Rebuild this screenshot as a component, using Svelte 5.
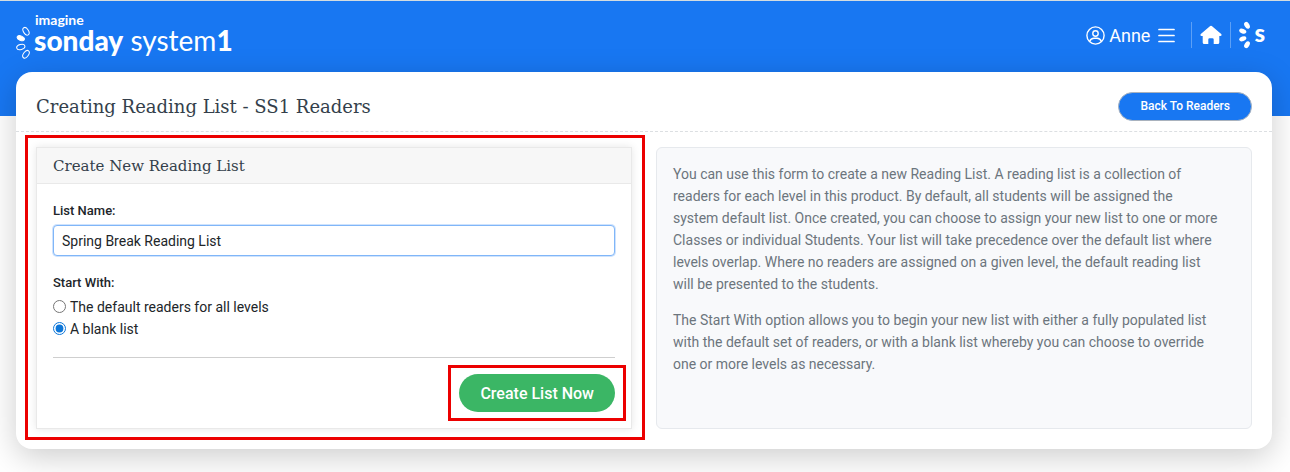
<script>
  let listName = 'Spring Break Reading List';
  let startWith = 'blank';

  const options = [
    { value: 'default', label: 'The default readers for all levels' },
    { value: 'blank', label: 'A blank list' }
  ];

  function handleSubmit() {
    listName = listName.trim();
  }
</script>

<header>
  <a class="logo" href="/" aria-label="imagine sonday system 1">
    <svg class="petals" width="16" height="34" viewBox="0 0 16 34" fill="none" stroke="#fff">
      <ellipse cx="10" cy="5.3" rx="2.5" ry="4.2" transform="rotate(-32 10 5.3)" />
      <ellipse cx="4.8" cy="12.2" rx="3.8" ry="2.2" transform="rotate(22 4.8 12.2)" fill="#fff" />
      <ellipse cx="4.8" cy="21" rx="4.2" ry="2.5" transform="rotate(-16 4.8 21)" />
      <ellipse cx="10" cy="28.3" rx="2.5" ry="4.3" transform="rotate(36 10 28.3)" />
    </svg>
    <span class="words">
      <span class="brand">imagine</span>
      <span class="product"><b>sonday</b> <span>system</span><strong>1</strong></span>
    </span>
  </a>

  <nav>
    <button class="user" type="button">
      <svg width="19" height="19" viewBox="0 0 19 19" fill="none" stroke="#fff" stroke-width="1.4">
        <circle cx="9.5" cy="9.5" r="8.6" />
        <circle cx="9.5" cy="7.5" r="2.7" />
        <path d="M3.6 15.6C4.4 13.4 6 12.3 8 12.3h3c2 0 3.6 1.1 4.4 3.3" />
      </svg>
      <span>Anne</span>
      <svg width="17" height="15" viewBox="0 0 17 15" stroke="#fff" stroke-width="1.7" stroke-linecap="round">
        <path d="M1 1.500h15M1 7.500h15M1 13.500h15" />
      </svg>
    </button>
    <a class="home" href="/home" aria-label="Home">
      <svg width="22" height="20" viewBox="0 0 22 20" fill="#fff">
        <path d="M10.200 1a1.200 1.200 0 0 1 1.600 0l9.400 8c.8.800.4 1.900-.7 1.900h-1.200v6.500a1.600 1.600 0 0 1-1.600 1.600h-4v-4.400a1.300 1.300 0 0 0-1.300-1.300h-2.800a1.300 1.300 0 0 0-1.300 1.300V19h-4a1.600 1.600 0 0 1-1.600-1.600v-6.500H1.500c-1.100 0-1.500-1.100-.7-1.900z" />
      </svg>
    </a>
    <a class="mark" href="/products" aria-label="Sonday">
      <svg width="13" height="28" viewBox="0 0 13 28" fill="#fff">
        <ellipse cx="8" cy="4.300" rx="2.400" ry="3.700" transform="rotate(-32 8 4.300)" />
        <ellipse cx="3.800" cy="10.200" rx="3.700" ry="2.300" transform="rotate(18 3.800 10.200)" />
        <ellipse cx="3.800" cy="17.800" rx="3.700" ry="2.300" transform="rotate(-18 3.800 17.800)" />
        <ellipse cx="8" cy="23.700" rx="2.400" ry="3.700" transform="rotate(32 8 23.700)" />
      </svg>
      <b>s</b>
    </a>
  </nav>
</header>

<main>
  <div class="title">
    <h1>Creating Reading List - SS1 Readers</h1>
    <button class="back" type="button">Back To Readers</button>
  </div>

  <div class="columns">
    <form class="card marked" on:submit|preventDefault={handleSubmit}>
      <h2>Create New Reading List</h2>
      <div class="body">
        <label class="name" for="list-name">List Name:</label>
        <input id="list-name" type="text" bind:value={listName} />

        <fieldset>
          <legend>Start With:</legend>
          {#each options as option}
            <label class="option">
              <input type="radio" name="start" value={option.value} bind:group={startWith} />
              {option.label}
            </label>
          {/each}
        </fieldset>

        <div class="actions">
          <span class="marked">
            <button class="create" type="submit">Create List Now</button>
          </span>
        </div>
      </div>
    </form>

    <section class="help">
      <p>
        You can use this form to create a new Reading List. A reading list is a collection of
        readers for each level in this product. By default, all students will be assigned the
        system default list. Once created, you can choose to assign your new list to one or more
        Classes or individual Students. Your list will take precedence over the default list where
        levels overlap. Where no readers are assigned on a given level, the default reading list
        will be presented to the students.
      </p>
      <p>
        The Start With option allows you to begin your new list with either a fully populated list
        with the default set of readers, or with a blank list whereby you can choose to override
        one or more levels as necessary.
      </p>
    </section>
  </div>
</main>

<style>
  :global(body) {
    margin: 0;
    background: #fff;
    color: #212529;
    font-family: Roboto, sans-serif;
    font-size: 14px;
  }

  * {
    box-sizing: border-box;
  }

  button {
    font-family: inherit;
    cursor: pointer;
  }

  header {
    display: flex;
    justify-content: space-between;
    align-items: flex-start;
    height: 116px;
    padding: 12px 25px 0 16px;
    border-top: 1px solid #d3dce0;
    background: #1877f2;
    color: #fff;
  }

  a {
    color: #fff;
    text-decoration: none;
  }

  .logo {
    display: flex;
    gap: 2px;
    font-family: Lato, sans-serif;
  }

  .petals {
    margin-top: 13px;
  }

  .words {
    display: flex;
    flex-direction: column;
  }

  .brand {
    padding-left: 1px;
    font-size: 14px;
    font-weight: 700;
    line-height: 13px;
  }

  .product {
    font-size: 28px;
    line-height: 28px;
  }

  .product b {
    font-weight: 900;
  }

  .product strong {
    font-weight: 900;
  }

  nav {
    display: flex;
    align-items: center;
    margin-top: 9px;
  }

  .user {
    display: flex;
    align-items: center;
    gap: 4px;
    padding: 0 16px 0 0;
    border: 0;
    background: none;
    color: #fff;
    font-size: 18px;
  }

  .user span {
    margin-right: 4px;
  }

  .home,
  .mark {
    display: flex;
    align-items: center;
    height: 26px;
    padding: 0 8px;
    border-left: 1px solid #5da0f6;
  }

  .mark {
    gap: 2px;
    padding-right: 0;
    font-family: Lato, sans-serif;
    font-size: 24px;
    line-height: 24px;
  }

  .mark b {
    margin-top: -5px;
    font-weight: 900;
  }

  main {
    position: relative;
    margin: -44px 18px 24px 16px;
    border-radius: 16px;
    background: #fff;
    box-shadow: 0 8px 32px rgba(0, 0, 0, 0.2);
  }

  .title {
    display: flex;
    justify-content: space-between;
    align-items: center;
    height: 60px;
    padding: 9px 20px 0;
    border-bottom: 1px dashed #dcdfe2;
  }

  h1,
  h2 {
    margin: 0;
    color: #343f4b;
    font-family: 'Roboto Slab', 'DejaVu Serif', serif;
    font-weight: 400;
  }

  h1 {
    font-size: 18px;
  }

  .back {
    height: 29px;
    padding: 0 21px;
    border: 1px solid #a9b2bd;
    border-radius: 15px;
    background: #1877f2;
    color: #fff;
    font-size: 12px;
    font-weight: 500;
  }

  .columns {
    display: grid;
    grid-template-columns: 1fr 1fr;
    gap: 24px;
    padding: 15px 20px 20px;
  }

  .card {
    border: 1px solid #e9e9e9;
    box-shadow: 0 0 8px rgba(0, 0, 0, 0.1);
  }

  /* red callout drawn around the form and the submit button */
  .marked {
    position: relative;
  }

  .marked::after {
    content: '';
    position: absolute;
    inset: -13px -14px -12px -12px;
    border: 3px solid #ec0000;
    pointer-events: none;
  }

  span.marked::after {
    inset: -9px -11px;
  }

  h2 {
    padding: 2px 16px 0;
    border-bottom: 1px solid #e9e9e9;
    background: #f7f7f7;
    font-size: 15px;
    line-height: 33px;
  }

  .body {
    padding: 17px 16px 16px;
  }

  .name,
  legend {
    display: block;
    padding: 0;
    font-size: 13px;
    font-weight: 500;
    line-height: 20px;
  }

  input[type='text'] {
    width: 100%;
    height: 31px;
    margin: 4px 0 17px;
    padding: 0 8px;
    border: 1px solid #80b6f8;
    border-radius: 4px;
    outline: 0;
    box-shadow: 0 0 0 1px #cfe3fd;
    color: #212529;
    font-family: inherit;
    font-size: 14px;
  }

  fieldset {
    margin: 0;
    padding: 0 0 17px;
    border: 0;
    border-bottom: 1px solid #cfcfcf;
  }

  legend {
    margin-bottom: 3px;
  }

  .option {
    display: flex;
    align-items: center;
    gap: 4px;
    line-height: 22px;
  }

  .option input {
    width: 13px;
    height: 13px;
    margin: 0 0 2px;
    accent-color: #0d76d8;
  }

  .actions {
    display: flex;
    justify-content: flex-end;
    padding-top: 16px;
  }

  .create {
    display: block;
    height: 38px;
    padding: 0 21px;
    border: 0;
    border-radius: 19px;
    background: #3bb665;
    color: #fff;
    font-size: 16px;
    font-weight: 500;
  }

  .help {
    padding: 15px 32px 16px 16px;
    border: 1px solid #e6e9ed;
    border-radius: 6px;
    background: #f8f9fb;
    color: #6c757d;
  }

  .help p {
    margin: 0 0 14px;
    line-height: 22px;
  }

  @media (max-width: 700px) {
    .columns {
      grid-template-columns: 1fr;
    }
  }
</style>
